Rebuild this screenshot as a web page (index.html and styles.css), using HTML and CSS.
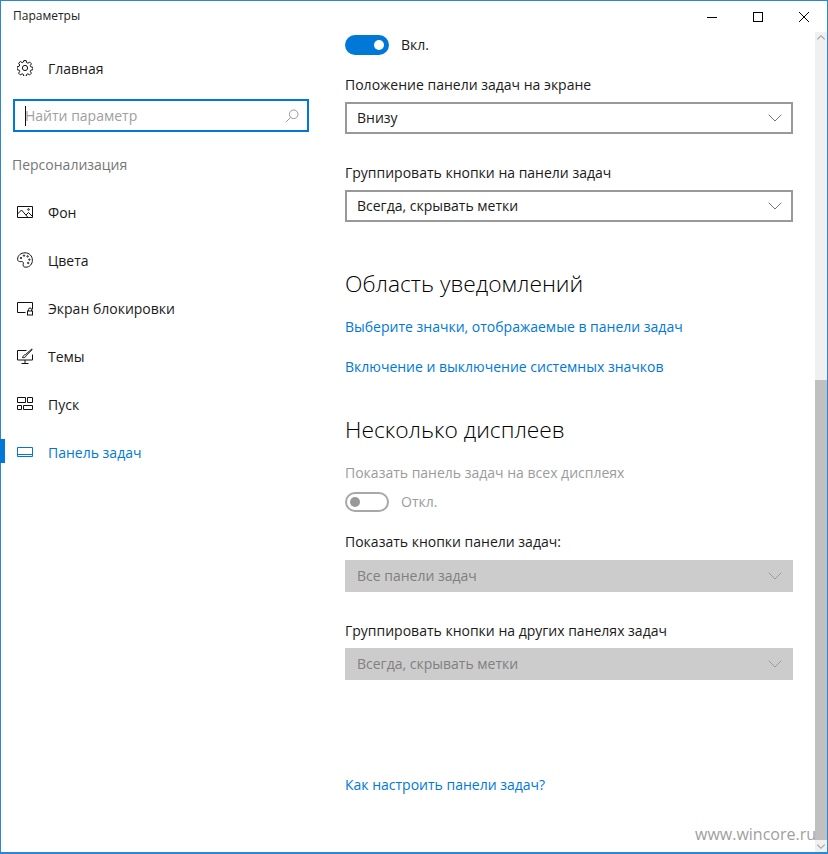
FILE: index.html
```html
<!DOCTYPE html>
<html lang="ru">
<head>
<meta charset="utf-8">
<title>Параметры</title>
<link rel="stylesheet" href="styles.css">
</head>
<body>
<div class="window">
  <header class="titlebar">
    <span class="title">Параметры</span>
    <div class="controls">
      <svg class="ctl" viewBox="0 0 46 32"><path d="M18 16.500h10" /></svg>
      <svg class="ctl" viewBox="0 0 46 32"><rect x="18.500" y="11.500" width="9" height="9" /></svg>
      <svg class="ctl" viewBox="0 0 46 32"><path d="M18 11l10 10M28 11L18 21" /></svg>
    </div>
  </header>
  <div class="body">
    <nav class="sidebar">
      <a class="nav-item home">
        <svg class="ico" viewBox="0 0 16 16"><path d="M6.800.6h2.400l.4 2 1.300.6 1.800-1.100 1.700 1.700-1.100 1.800.6 1.300 2 .4v2.400l-2 .4-.6 1.300 1.100 1.800-1.700 1.700-1.800-1.100-1.300.6-.4 2H6.800l-.4-2-1.300-.6-1.800 1.100-1.700-1.700 1.100-1.800-.6-1.300-2-.4V6.700l2-.4.6-1.300-1.100-1.800 1.700-1.700 1.800 1.100 1.300-.6z"/><circle cx="8" cy="8" r="2.600"/></svg>
        <span>Главная</span>
      </a>
      <div class="search">
        <span class="caret"></span>
        <span class="placeholder">Найти параметр</span>
        <svg class="search-ico" viewBox="0 0 14 14"><circle cx="8.700" cy="5.300" r="4.300"/><path d="M5.600 8.400L.8 13.200"/></svg>
      </div>
      <div class="section">Персонализация</div>
      <a class="nav-item">
        <svg class="ico" viewBox="0 0 16 16"><path d="M.5 2.500h15v11H.5zM.5 10l4-4 6.500 7.500M9 11l2.500-2.500 4 4"/><circle cx="11.500" cy="5.500" r=".8"/></svg>
        <span>Фон</span>
      </a>
      <a class="nav-item">
        <svg class="ico" viewBox="0 0 16 16"><path d="M8 .8C3.800.8.6 3.600.6 7.200c0 2 1.600 2.600 3 2.400 1.600-.2 2.800.2 2.800 1.600 0 1.200-.6 1.600-.2 2.600.4 1 1.400 1.400 2.600 1.400 4 0 6.600-3.200 6.600-7 0-4.200-3.200-7.400-7.400-7.400z"/><circle cx="4" cy="6" r=".7"/><circle cx="7" cy="3.600" r=".7"/><circle cx="10.600" cy="4.400" r=".7"/><circle cx="12.400" cy="7.600" r=".7"/><circle cx="11.200" cy="11" r=".7"/></svg>
        <span>Цвета</span>
      </a>
      <a class="nav-item">
        <svg class="ico" viewBox="0 0 16 16"><path d="M8.500 12.500H.5v-10h15v7"/><rect x="10.500" y="11" width="5" height="4"/><path d="M11.500 11V9.500a1.500 1.500 0 0 1 3 0V11"/></svg>
        <span>Экран блокировки</span>
      </a>
      <a class="nav-item">
        <svg class="ico" viewBox="0 0 16 16"><path d="M9.500 2.500H.5V12h15V6.500M8 12v3M4.500 15.500h7"/><path d="M15 .8L8.500 6.600c-1.600.2-2.300 1.400-3 3 1.700.3 3.200-.3 3.700-2L15.500 1.300"/></svg>
        <span>Темы</span>
      </a>
      <a class="nav-item">
        <svg class="ico" viewBox="0 0 16 16"><path d="M.5 1.500h8v5h-8zM10.500 1.500h5v5h-5zM.5 9.500h4v4h-4zM6.500 9.500h9v4h-9z"/></svg>
        <span>Пуск</span>
      </a>
      <a class="nav-item active">
        <svg class="ico" viewBox="0 0 16 16"><path d="M.5 3.500h15v9H.5zM.5 10.500h15"/></svg>
        <span>Панель задач</span>
      </a>
    </nav>
    <main class="content">
      <div class="toggle-row first">
        <span class="toggle on"><i></i></span>
        <span class="toggle-text">Вкл.</span>
      </div>
      <div class="label l1">Положение панели задач на экране</div>
      <div class="select"><span>Внизу</span><svg class="chev" viewBox="0 0 14 8"><path d="M.7.7L7 7l6.300-6.300"/></svg></div>
      <div class="label l2">Группировать кнопки на панели задач</div>
      <div class="select"><span>Всегда, скрывать метки</span><svg class="chev" viewBox="0 0 14 8"><path d="M.7.7L7 7l6.300-6.300"/></svg></div>
      <h2 class="heading h-a">Область уведомлений</h2>
      <a class="link la">Выберите значки, отображаемые в панели задач</a>
      <a class="link lb">Включение и выключение системных значков</a>
      <h2 class="heading h-b">Несколько дисплеев</h2>
      <div class="label muted lc">Показать панель задач на всех дисплеях</div>
      <div class="toggle-row second">
        <span class="toggle off"><i></i></span>
        <span class="toggle-text muted">Откл.</span>
      </div>
      <div class="label ld">Показать кнопки панели задач:</div>
      <div class="select disabled s3"><span>Все панели задач</span><svg class="chev" viewBox="0 0 14 8"><path d="M.7.7L7 7l6.300-6.300"/></svg></div>
      <div class="label le">Группировать кнопки на других панелях задач</div>
      <div class="select disabled s4"><span>Всегда, скрывать метки</span><svg class="chev" viewBox="0 0 14 8"><path d="M.7.7L7 7l6.300-6.300"/></svg></div>
      <a class="link lhelp">Как настроить панели задач?</a>
    </main>
    <aside class="scrollbar">
      <svg class="arrow" viewBox="0 0 13 12"><path d="M2.500 7.500l4-4 4 4"/></svg>
      <div class="track"></div>
      <div class="thumb"></div>
      <svg class="arrow" viewBox="0 0 13 12"><path d="M2.500 4.500l4 4 4-4"/></svg>
    </aside>
  </div>
  <div class="watermark">www.wincore.ru</div>
</div>
</body>
</html>
```

FILE: styles.css
```css
* { box-sizing: border-box; }
html, body { margin: 0; padding: 0; }
body {
  width: 828px;
  height: 854px;
  overflow: hidden;
  background: #fff;
  font-family: "Open Sans", "Noto Sans", "Liberation Sans", sans-serif;
  color: #1a1a1a;
}
.window {
  position: relative;
  width: 828px;
  height: 854px;
  display: flex;
  flex-direction: column;
  border: 1px solid #2b87d3;
  border-bottom-width: 2px;
}
.titlebar {
  height: 31px;
  display: flex;
  justify-content: space-between;
  flex: none;
}
.title { font-size: 12px; line-height: 30px; padding-left: 12px; color: #222; }
.controls { display: flex; }
.ctl { width: 46px; height: 32px; fill: none; stroke: #000; stroke-width: 1; }
.body { flex: 1; display: flex; min-height: 0; }
.sidebar { width: 344px; flex: none; display: flex; flex-direction: column; padding-top: 12px; }
.nav-item {
  height: 48px;
  display: flex;
  align-items: center;
  gap: 15px;
  padding-left: 16px;
  font-size: 14px;
  color: #1a1a1a;
  position: relative;
}
.ico { width: 16px; height: 16px; fill: none; stroke: #111; stroke-width: 1; flex: none; }
.active { color: #0078d7; }
.active .ico { stroke: #0078d7; }
.active::before { content: ""; position: absolute; left: -1px; top: 11px; width: 5px; height: 24px; background: #0078d7; }
.search {
  margin: 7px 0 0 12px;
  width: 296px;
  height: 33px;
  border: 2px solid #0078d7;
  display: flex;
  align-items: center;
  padding: 0 3px 0 10px;
  position: relative;
  font-size: 14px;
}
.caret { position: absolute; left: 10px; top: 5px; width: 1px; height: 20px; background: #111; }
.placeholder { flex: 1; color: #a0a0a0; }
.search-ico { width: 14px; height: 14px; fill: none; stroke: #999; stroke-width: 1; margin-right: 5px; }
.section { margin: 23px 0 13px 11px; font-size: 14px; line-height: 20px; color: #767676; height: 20px; }
.content { width: 470px; flex: none; padding-top: 3px; display: flex; flex-direction: column; align-items: flex-start; font-size: 14px; }
.toggle-row { display: flex; align-items: center; gap: 12px; height: 20px; }
.toggle { width: 44px; height: 20px; border-radius: 10px; position: relative; display: block; flex: none; }
.toggle i { position: absolute; width: 10px; height: 10px; border-radius: 50%; top: 5px; }
.toggle.on { background: #0078d7; }
.toggle.on i { background: #fff; right: 5px; }
.toggle.off { border: 2px solid #a8a8a8; }
.toggle.off i { background: #999; left: 3px; top: 3px; }
.toggle-text { font-size: 14px; padding-bottom: 2px; }
.label { height: 20px; line-height: 20px; font-size: 14px; color: #1a1a1a; }
.muted { color: #9b9b9b; }
.l1 { margin-top: 20px; }
.l2 { margin-top: 29px; }
.select {
  margin-top: 7px;
  width: 448px;
  height: 32px;
  border: 2px solid #999;
  display: flex;
  align-items: center;
  justify-content: space-between;
  padding: 0 9px 2px 10px;
  font-size: 14px;
  color: #1a1a1a;
}
.chev { width: 14px; height: 8px; fill: none; stroke: #777; stroke-width: 1; margin-top: 2px; }
.disabled { background: #ccc; border-color: #ccc; color: #808080; }
.disabled .chev { stroke: #9a9a9a; }
.s3 { margin-top: 8px; }
.le { margin-top: 29px; }
.s4 { margin-top: 7px; }
.heading { margin: 0; font-weight: 300; font-size: 22.800px; line-height: 30px; color: #000; }
.h-a { margin-top: 47px; }
.h-b { margin-top: 38px; }
.link { color: #0078d7; font-size: 14px; line-height: 20px; height: 20px; }
.la { margin-top: 18px; }
.lb { margin-top: 20px; }
.lc { margin-top: 18px; }
.second { margin-top: 9px; }
.ld { margin-top: 20px; }
.lhelp { margin-top: 95px; }
.scrollbar { flex: none; width: 12px; background: #f0f0f0; display: flex; flex-direction: column; }
.arrow { width: 12px; height: 12px; flex: none; fill: none; stroke: #a0a0a0; stroke-width: 1.2; }
.track { height: 336px; flex: none; }
.thumb { flex: 1; background: #c0c0c0; }
.watermark {
  position: absolute;
  right: 11px;
  bottom: 6px;
  font-size: 16px;
  line-height: 24px;
  color: #a0a0a0;
}
```
